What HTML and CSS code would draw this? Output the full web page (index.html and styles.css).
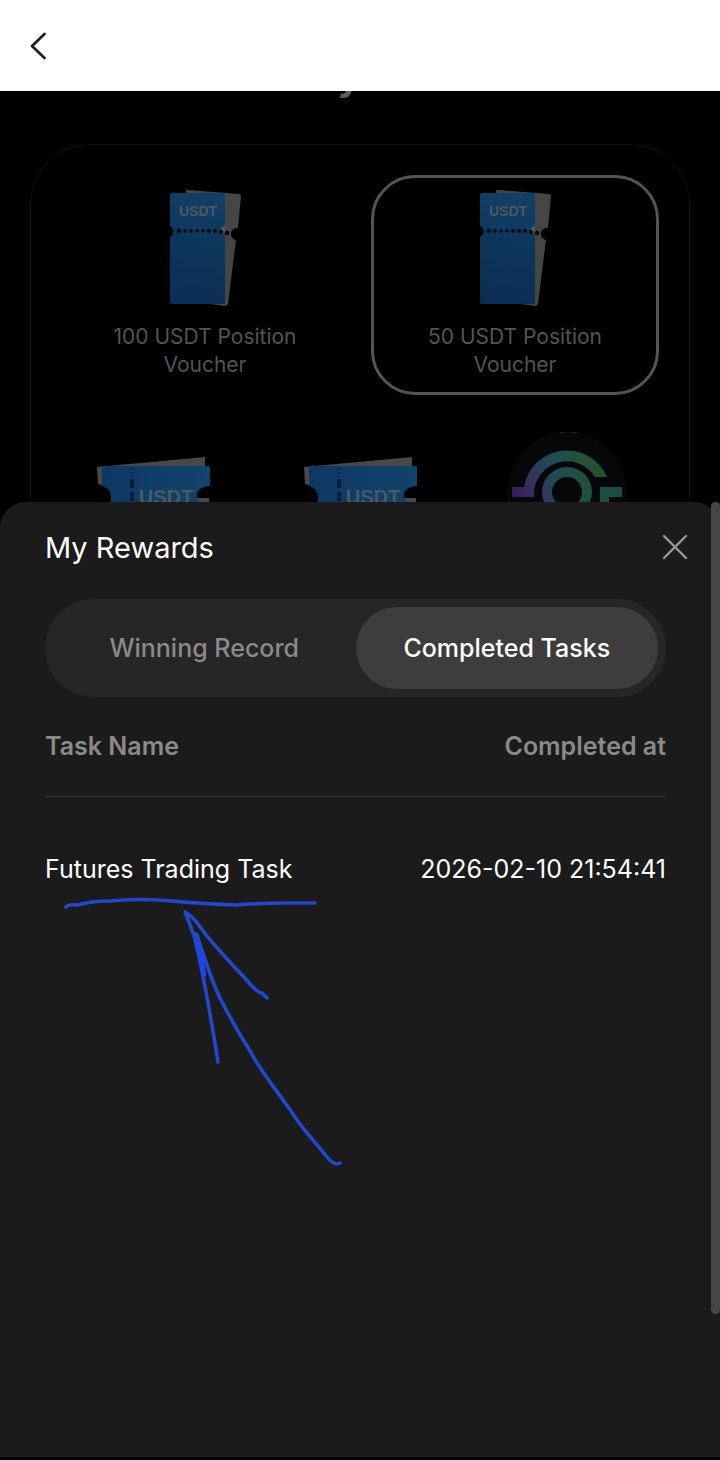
FILE: index.html
```html
<!DOCTYPE html>
<html lang="en">
<head>
<meta charset="utf-8">
<meta name="viewport" content="width=device-width, initial-scale=1">
<title>My Rewards</title>
<link rel="stylesheet" href="styles.css">
</head>
<body>
<svg class="defs" aria-hidden="true">
  <defs>
    <linearGradient id="blue-tall" x1="0.6" y1="0" x2="0.5" y2="1">
      <stop offset="0" stop-color="#114067"/><stop offset="0.45" stop-color="#0d365d"/><stop offset="1" stop-color="#0c2d56"/>
    </linearGradient>
    <linearGradient id="blue-wide" x1="0" y1="0" x2="1" y2="0">
      <stop offset="0" stop-color="#0d3862"/><stop offset="1" stop-color="#12436a"/>
    </linearGradient>
    <linearGradient id="logo" gradientUnits="userSpaceOnUse" x1="18" y1="82" x2="108" y2="45">
      <stop offset="0" stop-color="#3b1751"/><stop offset="0.25" stop-color="#38305f"/><stop offset="0.55" stop-color="#1b4e52"/><stop offset="1" stop-color="#285229"/>
    </linearGradient>
    <symbol id="ticket-tall" viewBox="0 0 110 140">
      <path fill="#454545" d="M36 11Q36 9 38 10L89 14Q91 14 91 16L88 48A6 6 0 0 0 86 60L78 124Q77 126 75 126L60 124Z"/>
      <path fill="url(#blue-tall)" d="M22 13H75V124H22Q20 124 20 122V57A6 6 0 0 0 20 46V15Q20 13 22 13Z"/>
      <path fill="#555" d="M71 48l4-3v9l-4-2z"/>
      <g fill="#020304"><circle cx="29" cy="51" r="2.2"/><circle cx="35" cy="51" r="1.7"/><circle cx="41" cy="51" r="1.7"/><circle cx="47" cy="51" r="1.8"/><circle cx="53" cy="51" r="1.8"/><circle cx="59" cy="51" r="2"/><circle cx="65" cy="51" r="2"/><circle cx="71" cy="52" r="2"/><circle cx="77" cy="53" r="2.3"/></g>
      <text class="ticket-tall-text" x="48" y="36">USDT</text>
    </symbol>
    <symbol id="ticket-wide" viewBox="0 0 146 130">
      <path fill="#484848" d="M17 47L125 37V47L122 50H24V66Q33 70 33 78L28 90V100H129V78H117V50H22V65L18 64Z"/>
      <path fill="url(#blue-wide)" d="M22 46H129Q130 46 130 48V66Q118 67 117 74Q117 80 121 84V110H25V88Q31 86 31 78Q31 68 22 66Z"/>
      <path fill="#000" d="M16 65L22 66Q30 69 30 77L28 90H12ZM131 66Q119 67 118 73Q119 78 129 78H140V65Z"/>
      <path stroke="#041946" stroke-width="4" fill="none" d="M52 59V68M52 72V81M52 85V94"/>
      <path stroke="#0b2b55" stroke-width="3" stroke-dasharray="2 2" d="M52 48V57"/>
      <text class="ticket-wide-text" x="86" y="84">USDT</text>
    </symbol>
  </defs>
</svg>

<header class="topbar">
  <button class="back" type="button" aria-label="Back">
    <svg width="18" height="28" viewBox="0 0 18 28"><path d="M15.500 2L3 14L15.500 26" fill="none" stroke="#202124" stroke-width="2.800" stroke-linecap="round" stroke-linejoin="round"/></svg>
  </button>
</header>

<main class="stage">
  <h2 class="page-title">y</h2>
  <section class="prizes">
    <div class="prize-row">
      <article class="prize">
        <svg class="prize-art" width="110" height="140"><use href="#ticket-tall"/></svg>
        <p class="prize-name">100 USDT Position Voucher</p>
      </article>
      <article class="prize prize-selected">
        <svg class="prize-art" width="110" height="140"><use href="#ticket-tall"/></svg>
        <p class="prize-name">50 USDT Position Voucher</p>
      </article>
    </div>
    <div class="prize-row">
      <article class="prize-small"><svg width="146" height="130"><use href="#ticket-wide"/></svg></article>
      <article class="prize-small"><svg width="146" height="130"><use href="#ticket-wide"/></svg></article>
      <article class="prize-small">
        <svg width="146" height="130" viewBox="0 0 146 130">
          <circle cx="73" cy="72" r="60" fill="#050708"/>
          <path d="M66 12.500h5M77 12.500h6" stroke="#222"/>
          <g fill="url(#logo)">
            <path d="M18 67H30A43.500 43.500 0 0 1 113 57H101A33 33 0 0 0 40 72V77H18Z"/>
            <path fill-rule="evenodd" d="M48 72a25 25 0 1 0 50 0a25 25 0 1 0-50 0ZM58 72a15 15 0 1 1 30 0a15 15 0 1 1-30 0Z"/>
          </g>
          <path fill="#1d4e44" d="M106 67H128V77H115V90H106Z"/>
        </svg>
      </article>
    </div>
  </section>

  <section class="sheet" role="dialog" aria-labelledby="sheet-title">
    <div class="sheet-head">
      <h1 class="sheet-title" id="sheet-title">My Rewards</h1>
      <button class="close" type="button" aria-label="Close">
        <svg width="26" height="26" viewBox="0 0 26 26"><path d="M2 2L24 24M24 2L2 24" fill="none" stroke="#9a9a9a" stroke-width="2.400" stroke-linecap="round"/></svg>
      </button>
    </div>
    <div class="sheet-body">
      <div class="tabs" role="tablist">
        <button class="tab" type="button" role="tab" aria-selected="false">Winning Record</button>
        <button class="tab tab-active" type="button" role="tab" aria-selected="true">Completed Tasks</button>
      </div>
      <table class="tasks">
        <thead><tr><th>Task Name</th><th class="when">Completed at</th></tr></thead>
        <tbody><tr><td>Futures Trading Task</td><td class="when">2026-02-10 21:54:41</td></tr></tbody>
      </table>
    </div>
    <svg class="scribble" width="290" height="280" viewBox="60 890 290 280" aria-hidden="true">
      <g fill="none" stroke="#2148cf" stroke-width="3.600" stroke-linecap="round" stroke-linejoin="round">
        <path d="M66 907Q68 904 77 905Q92 901 110 901Q140 898 172 901Q205 904 235 905Q265 903 285 903L315 903"/>
        <path d="M267 998L262 993Q257 993 244 977C230 962 210 942 198 924Q192 916 185 912Q190 924 194 936C203 970 210 1012 218 1062"/>
        <path stroke="#1c45ea" stroke-width="4.500" d="M197 936Q201 955 204 975"/>
        <path d="M196 934C205 957 212 984 222 1002Q235 1027 250 1051C261 1072 278 1092 293 1114C303 1130 318 1145 327 1157Q334 1166 340 1163"/>
      </g>
    </svg>
    <div class="scroll-thumb"></div>
  </section>
</main>
</body>
</html>
```

FILE: styles.css
```css
* { box-sizing: border-box; }

body {
  margin: 0;
  min-height: 100vh;
  display: flex;
  flex-direction: column;
  background: #000;
  color: #fff;
  font-family: Inter, "Liberation Sans", sans-serif;
}

h1, h2, p { margin: 0; }

button {
  border: 0;
  padding: 0;
  background: none;
  color: inherit;
  font: inherit;
}

button svg { display: block; }

.defs { position: absolute; width: 0; height: 0; }

.topbar {
  display: flex;
  align-items: center;
  height: 91px;
  padding: 0 29px;
  background: #fff;
}

.stage {
  position: relative;
  flex: 1;
  overflow: hidden;
  padding: 0 30px;
}

.page-title {
  height: 68px;
  margin-top: -15px;
  padding-right: 22px;
  font-size: 38px;
  font-weight: 700;
  line-height: 0;
  text-align: center;
  color: #5c5c5c;
}

.prizes {
  display: flex;
  flex-direction: column;
  gap: 25px;
  min-height: 700px;
  padding: 30px;
  border: 1px solid #121212;
  border-radius: 60px;
}

.prize-row { display: flex; gap: 22px; }

.prize {
  flex: 1;
  display: flex;
  flex-direction: column;
  align-items: center;
  gap: 3px;
  padding: 2px 40px 13px;
  border: 3px solid transparent;
  border-radius: 44px;
}

.prize-selected { border-color: #545454; }

.prize-name {
  font-size: 21px;
  line-height: 28px;
  text-align: center;
  color: #545454;
}

.prize-small { flex: 1; display: flex; justify-content: center; }
.prize-small svg { flex: none; }

.ticket-tall-text,
.ticket-wide-text {
  font-family: "Liberation Sans", sans-serif;
  font-weight: 700;
  text-anchor: middle;
  fill: #4d5860;
}

.ticket-tall-text { font-size: 14px; }
.ticket-wide-text { font-size: 20px; }

.sheet {
  position: absolute;
  inset: 411px 0 3px 0;
  background: #1b1b1b;
  border-radius: 26px 26px 0 0;
}

.sheet-head {
  display: flex;
  align-items: center;
  justify-content: space-between;
  height: 90px;
  margin-bottom: 7px;
  padding: 0 32px 0 45px;
}

.sheet-title { font-size: 29px; font-weight: 400; }

.sheet-body { padding: 0 54px 0 45px; }

.tabs {
  display: flex;
  height: 98px;
  padding: 8px;
  border-radius: 49px;
  background: #262626;
}

.tab {
  flex: 1;
  border-radius: 41px;
  font-size: 25px;
  font-weight: 500;
  color: #8a8a8a;
}

.tab-active { background: #3d3d3d; color: #fff; }

.tasks {
  width: 100%;
  border-collapse: collapse;
  font-size: 25px;
  text-align: left;
}

.tasks th {
  height: 99px;
  padding: 0;
  border-bottom: 1px solid #333;
  font-weight: 600;
  color: #8a8a8a;
}

.tasks td { height: 146px; padding: 0; }

.tasks .when { text-align: right; }

.scribble { position: absolute; left: 60px; top: 388px; }

.scroll-thumb {
  position: absolute;
  top: 0;
  right: 0;
  width: 9px;
  height: 85%;
  border-radius: 5px;
  background: #464646;
}
```
